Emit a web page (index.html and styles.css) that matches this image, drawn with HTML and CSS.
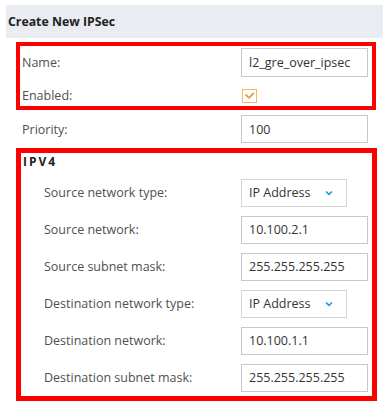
FILE: index.html
```html
<!DOCTYPE html>
<html lang="en">
<head>
    <meta charset="UTF-8">
    <meta name="viewport" content="width=device-width, initial-scale=1.0">
    <title>Create New IPSec</title>
    <link rel="stylesheet" href="styles.css">
</head>
<body>
    <div class="panel-header">Create New IPSec</div>

    <div class="group highlight general">
        <div class="row">
            <label class="row-label">Name:</label>
            <input class="field" type="text" value="l2_gre_over_ipsec">
        </div>
        <div class="row row-check">
            <label class="row-label">Enabled:</label>
            <span class="checkbox">
                <svg width="11" height="9" viewBox="0 0 11 9">
                    <path d="M1.3 3.3 L5 6.9 L9.9 1.8" fill="none" stroke="#f39a2b" stroke-width="1.7"/>
                </svg>
            </span>
        </div>
    </div>

    <div class="row row-plain">
        <label class="row-label">Priority:</label>
        <input class="field" type="text" value="100">
    </div>

    <div class="group highlight ipv4">
        <div class="group-title">IPV4</div>
        <div class="row">
            <label class="row-label">Source network type:</label>
            <div class="select">
                <span>IP Address</span>
                <svg class="chevron" width="8" height="6" viewBox="0 0 8 6">
                    <path d="M1 1.5 L4 4.3 L7 1.5" fill="none" stroke="#1a9ee0" stroke-width="1.6"/>
                </svg>
            </div>
        </div>
        <div class="row">
            <label class="row-label">Source network:</label>
            <input class="field" type="text" value="10.100.2.1">
        </div>
        <div class="row">
            <label class="row-label">Source subnet mask:</label>
            <input class="field" type="text" value="255.255.255.255">
        </div>
        <div class="row">
            <label class="row-label">Destination network type:</label>
            <div class="select">
                <span>IP Address</span>
                <svg class="chevron" width="8" height="6" viewBox="0 0 8 6">
                    <path d="M1 1.5 L4 4.3 L7 1.5" fill="none" stroke="#1a9ee0" stroke-width="1.6"/>
                </svg>
            </div>
        </div>
        <div class="row">
            <label class="row-label">Destination network:</label>
            <input class="field" type="text" value="10.100.1.1">
        </div>
        <div class="row">
            <label class="row-label">Destination subnet mask:</label>
            <input class="field" type="text" value="255.255.255.255">
        </div>
    </div>
</body>
</html>
```

FILE: styles.css
```css
* {
    margin: 0;
    padding: 0;
    box-sizing: border-box;
}

body {
    font-family: "Open Sans", "DejaVu Sans", sans-serif;
    font-size: 12.5px;
    color: #505050;
    background: #fff;
    width: 390px;
}

.panel-header {
    margin: 5px 7px 4px 6px;
    height: 33px;
    line-height: 33px;
    padding-left: 2px;
    background: #e9ecf0;
    color: #222;
    font-weight: 700;
    font-size: 12.3px;
}

.highlight {
    border: 4px solid #ff0000;
    margin-left: 16px;
    width: 360px;
}

.row {
    display: grid;
    align-items: center;
}

.row-label {
    white-space: nowrap;
}

.field {
    width: 127px;
    height: 29px;
    border: 1px solid #c8c8c8;
    padding: 0 7px;
    font-family: inherit;
    font-size: 12.5px;
    color: #333;
    background: #fff;
    outline: none;
}

/* first box: name + enabled */
.general .row {
    grid-template-columns: 219px 127px;
    padding-left: 2px;
}

.general .row:first-child {
    height: 33px;
}

.general .row-check {
    height: 27px;
    padding-top: 6px;
}

.checkbox {
    width: 15px;
    height: 14px;
    border: 1px solid #f7b768;
    display: flex;
    align-items: center;
    justify-content: center;
    margin-left: 1px;
}

.row-plain {
    grid-template-columns: 219px 127px;
    margin-left: 22px;
    height: 38px;
}

.row-plain .field {
    height: 28px;
}

/* IPV4 box */
.ipv4 {
    border-width: 5px;
    width: 361px;
}

.group-title {
    height: 21px;
    line-height: 18px;
    padding-left: 2px;
    font-weight: 700;
    font-size: 12px;
    letter-spacing: 2px;
    color: #222;
}

.ipv4 .row {
    grid-template-columns: 197px 127px;
    padding-left: 23px;
    height: 37px;
}

.ipv4 .field {
    height: 28px;
}

.select {
    width: 106px;
    height: 28px;
    border: 1px solid #d4d4d4;
    display: flex;
    align-items: center;
    justify-content: space-between;
    padding: 0 13px 0 7px;
    color: #333;
}

.chevron {
    display: block;
}
```
